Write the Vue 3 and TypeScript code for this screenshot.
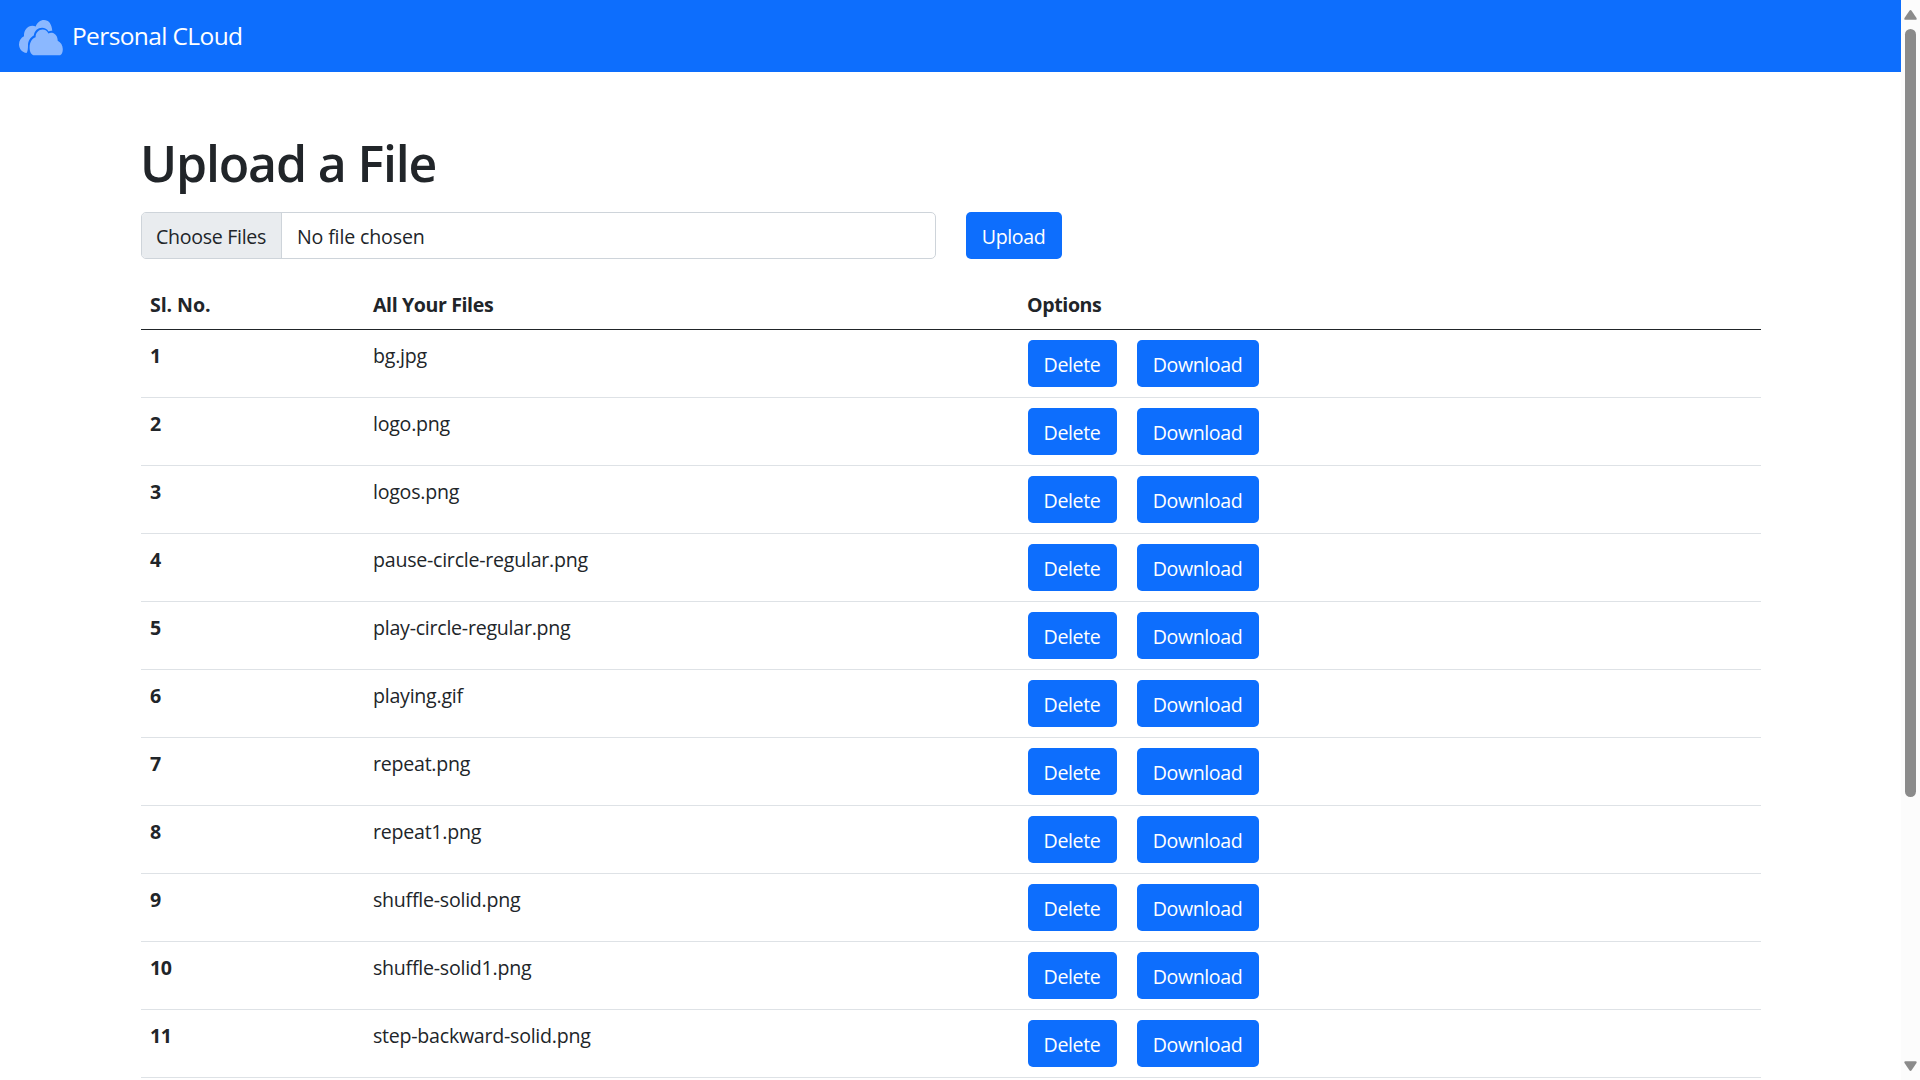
<script setup lang="ts">
const files: string[] = [
  'bg.jpg',
  'logo.png',
  'logos.png',
  'pause-circle-regular.png',
  'play-circle-regular.png',
  'playing.gif',
  'repeat.png',
  'repeat1.png',
  'shuffle-solid.png',
  'shuffle-solid1.png',
  'step-backward-solid.png',
]
</script>

<template>
  <div class="window">
    <div class="page">
      <nav class="navbar">
        <svg class="logo" width="44" height="36" viewBox="0 0 44 36" aria-hidden="true">
          <path
            fill="#8bb8ff"
            d="M7.6 33C3.2 32.4 0 28.9 0 24.5C0 20.6 2.1 17.5 5 16.2C4.6 10.4 8.6 5.8 13.4 5.8C14.6 5.8 15.8 6.1 16.7 6.5C18.2 2.4 21.3 0 25 0C29.7 0 32.8 4 33.3 10.8C31.9 10.7 30.6 10.9 29.6 11.4C28 9 25.8 7.8 23.1 7.8C18.8 7.8 15.5 10.9 14.8 15.4C11.3 17.2 9 20.9 9 25.2C9 28.5 8.8 31 7.6 33Z"
          />
          <path
            fill="#8bb8ff"
            d="M15.6 35.3C12.5 35.3 10.6 32 10.6 27.4C10.6 22.3 13.2 18.2 16.6 17.2C16.6 12.8 19.8 9.6 23.6 9.6C26.3 9.6 28.3 11.2 29.4 13.5C30.4 12.9 31.8 12.6 33 12.8C36.4 13.3 38.8 16.8 38.7 20.8C41.8 22.2 43.8 25.5 43.8 29C43.8 32.4 42.6 35.3 40.4 35.3Z"
          />
        </svg>
        <span class="brand">Personal CLoud</span>
      </nav>

      <main class="container">
        <h1>Upload a File</h1>
        <div class="upload">
          <label class="picker">
            <span class="choose">Choose Files</span>
            <span class="chosen">No file chosen</span>
          </label>
          <button class="btn upload-btn" type="button">Upload</button>
        </div>

        <table>
          <thead>
            <tr>
              <th class="number">Sl. No.</th>
              <th class="name">All Your Files</th>
              <th>Options</th>
            </tr>
          </thead>
          <tbody>
            <tr v-for="(file, index) in files" :key="file">
              <th>{{ index + 1 }}</th>
              <td class="file">{{ file }}</td>
              <td>
                <div class="options">
                  <button class="btn delete" type="button">Delete</button>
                  <button class="btn download" type="button">Download</button>
                </div>
              </td>
            </tr>
          </tbody>
        </table>
      </main>
    </div>

    <div class="scrollbar">
      <svg class="up" width="13" height="10" viewBox="0 0 13 10"><path fill="#8b8b8b" d="M5.4.7Q6.5-.6 7.6.7L12.5 8Q13.2 9.8 11.5 9.8H1.5Q-.2 9.8.5 8Z" /></svg>
      <div class="thumb"></div>
      <svg class="down" width="13" height="10" viewBox="0 0 13 10"><path fill="#8b8b8b" d="M5.4 9.3Q6.5 10.6 7.6 9.3L12.5 2Q13.2.2 11.5.2H1.5Q-.2.2.5 2Z" /></svg>
    </div>
  </div>
</template>

<style>
body {
  margin: 0;
  background: #fff;
  overflow: hidden;
}
</style>

<style scoped>
* {
  box-sizing: border-box;
}
.window {
  display: flex;
  width: 1920px;
  height: 1080px;
  overflow: hidden;
  color: #212529;
  font: 400 19.6px/30px 'Open Sans', 'Noto Sans', sans-serif;
  letter-spacing: -0.4px;
}
.page {
  width: 1901px;
}
.navbar {
  display: flex;
  align-items: flex-start;
  height: 72px;
  padding: 20px 0 0 19px;
  background: #0d6efd;
}
.logo {
  flex: none;
}
.brand {
  margin: -3px 0 0 9px;
  color: #fff;
  font-size: 24.5px;
  line-height: 38px;
  letter-spacing: -0.62px;
  white-space: nowrap;
}
.container {
  width: 1620px;
  margin: 0 0 0 141px;
}
h1 {
  margin: 0 0 0 -1px;
  padding-top: 61px;
  height: 140px;
  font-size: 50px;
  line-height: 60px;
  font-weight: 600;
  letter-spacing: -1.15px;
}
.upload {
  display: flex;
  gap: 30px;
  height: 47px;
}
.picker {
  display: flex;
  width: 795px;
  border: 1px solid #ced4da;
  border-radius: 5px;
  overflow: hidden;
}
.choose {
  width: 140px;
  padding: 9px 0 0 14px;
  background: #e9ecef;
  border-right: 1px solid #ced4da;
  letter-spacing: -0.3px;
  white-space: nowrap;
}
.chosen {
  padding: 9px 0 0 15px;
  letter-spacing: -0.15px;
}
.btn {
  display: block;
  height: 47px;
  margin: 0;
  padding: 2px 1px 0 0;
  border: 0;
  border-radius: 5px;
  background: #0d6efd;
  color: #fff;
  font: inherit;
  letter-spacing: inherit;
  text-align: center;
}
.upload-btn {
  width: 96px;
}
table {
  width: 1620px;
  margin-top: 20px;
  table-layout: fixed;
  border-collapse: separate;
  border-spacing: 0;
}
th,
td {
  padding: 10px;
  border-bottom: 1px solid #dee2e6;
  text-align: left;
  vertical-align: top;
}
th,
.file {
  padding: 11px 10px 9px 9px;
}
thead th {
  height: 51px;
  border-bottom-color: #212529;
}
th {
  font-weight: 700;
}
.file {
  letter-spacing: -0.25px;
}
.number {
  width: 223px;
  letter-spacing: -0.1px;
}
.name {
  width: 654px;
}
.options {
  display: flex;
  gap: 20px;
}
.delete {
  width: 89px;
}
.download {
  width: 122px;
}
.scrollbar {
  display: flex;
  flex-direction: column;
  align-items: center;
  width: 19px;
  background: #fcfcfc;
}
.up {
  flex: none;
  margin-top: 10px;
}
.thumb {
  flex: none;
  width: 11px;
  height: 768px;
  margin-top: 9px;
  border-radius: 6px;
  background: #8b8b8b;
}
.down {
  flex: none;
  margin-top: auto;
  margin-bottom: 9px;
}
</style>
